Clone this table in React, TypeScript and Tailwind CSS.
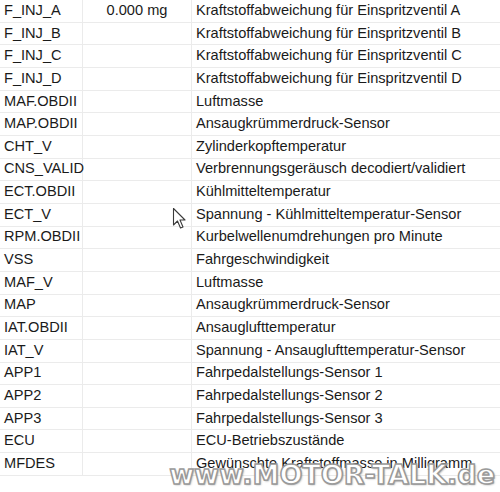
const rows: [string, string, string][] = [
  ['F_INJ_A', '0.000 mg', 'Kraftstoffabweichung für Einspritzventil A'],
  ['F_INJ_B', '', 'Kraftstoffabweichung für Einspritzventil B'],
  ['F_INJ_C', '', 'Kraftstoffabweichung für Einspritzventil C'],
  ['F_INJ_D', '', 'Kraftstoffabweichung für Einspritzventil D'],
  ['MAF.OBDII', '', 'Luftmasse'],
  ['MAP.OBDII', '', 'Ansaugkrümmerdruck-Sensor'],
  ['CHT_V', '', 'Zylinderkopftemperatur'],
  ['CNS_VALID', '', 'Verbrennungsgeräusch decodiert/validiert'],
  ['ECT.OBDII', '', 'Kühlmitteltemperatur'],
  ['ECT_V', '', 'Spannung - Kühlmitteltemperatur-Sensor'],
  ['RPM.OBDII', '', 'Kurbelwellenumdrehungen pro Minute'],
  ['VSS', '', 'Fahrgeschwindigkeit'],
  ['MAF_V', '', 'Luftmasse'],
  ['MAP', '', 'Ansaugkrümmerdruck-Sensor'],
  ['IAT.OBDII', '', 'Ansauglufttemperatur'],
  ['IAT_V', '', 'Spannung - Ansauglufttemperatur-Sensor'],
  ['APP1', '', 'Fahrpedalstellungs-Sensor 1'],
  ['APP2', '', 'Fahrpedalstellungs-Sensor 2'],
  ['APP3', '', 'Fahrpedalstellungs-Sensor 3'],
  ['ECU', '', 'ECU-Betriebszustände'],
  ['MFDES', '', 'Gewünschte Kraftstoffmasse in Milligramm'],
]

function Cursor() {
  return (
    <svg width="16" height="24" viewBox="0 0 16 24" className="absolute left-[172px] top-[207px]">
      <path d="M1.5 1.5 L1.5 18 L5.5 14 L8.5 21 L11 20 L8 13 L13 13 Z" fill="#fff" stroke="#3a3a3a" strokeWidth="1.1" strokeLinejoin="round" />
    </svg>
  )
}

export default function App() {
  return (
    <div className="relative w-[500px] h-[492px] bg-white overflow-hidden font-['Liberation_Sans',sans-serif] text-[14.6px] text-[#1a1a1a]">
      <div className="grid grid-cols-[83px_109px_1fr]">
        {rows.map(([name, value, desc]) => (
          <div key={name} className="contents">
            <div className="h-[22.67px] flex items-center pl-[4px] border-r border-b border-[#ebebeb] whitespace-nowrap">{name}</div>
            <div className="h-[22.67px] flex items-center justify-center border-r border-b border-[#ebebeb] whitespace-nowrap">{value}</div>
            <div className="h-[22.67px] flex items-center pl-[4px] border-b border-[#ebebeb] whitespace-nowrap">{desc}</div>
          </div>
        ))}
      </div>
      <Cursor />
      <div className="absolute right-[5px] bottom-[-3px] font-['DejaVu_Sans',sans-serif] font-bold text-[27px] text-white [-webkit-text-stroke:1.5px_#9a9a9a] [text-shadow:1px_1px_2px_rgba(0,0,0,0.35)] whitespace-nowrap">
        www.MOTOR-TALK.de
      </div>
    </div>
  )
}
